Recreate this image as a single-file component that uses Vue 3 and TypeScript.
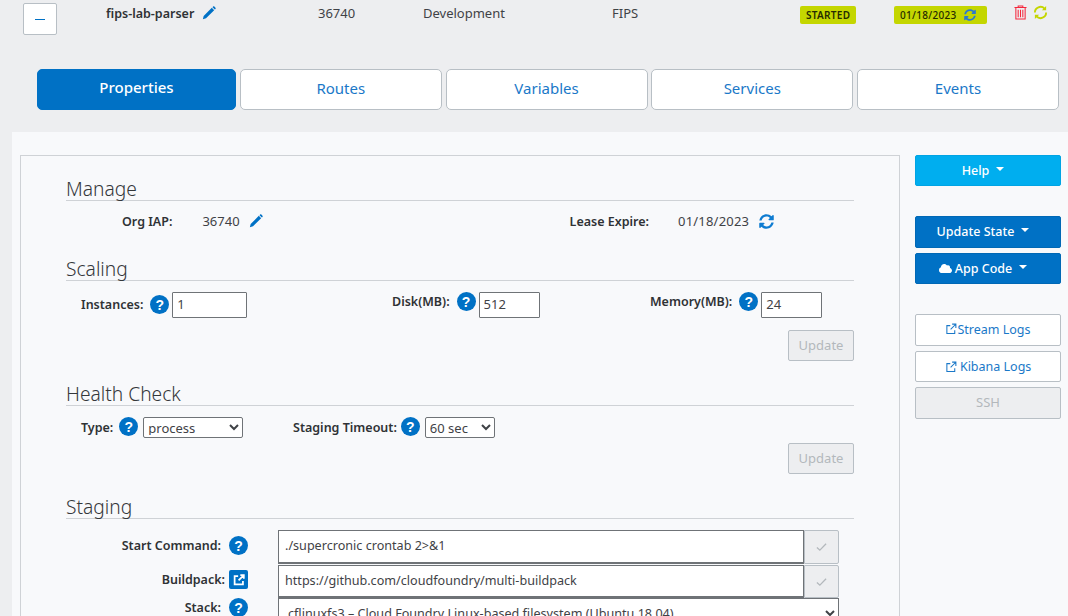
<script setup lang="ts">
const tabs = ['Properties', 'Routes', 'Variables', 'Services', 'Events']
const syncPath = 'M370.72 133.28C339.458 104.008 298.888 87.962 255.848 88c-77.458.068-144.328 53.178-162.791 126.85-1.344 5.363-6.122 9.15-11.651 9.15H24.103c-7.498 0-13.194-6.807-11.807-14.176C33.933 94.924 134.813 8 256 8c66.448 0 126.791 26.136 171.315 68.685L463.03 40.97C478.149 25.851 504 36.559 504 57.941V192c0 13.255-10.745 24-24 24H345.941c-21.382 0-32.09-25.851-16.971-40.971l41.75-41.749zM32 296h134.059c21.382 0 32.09 25.851 16.971 40.971l-41.75 41.75c31.262 29.273 71.835 45.319 114.876 45.28 77.418-.07 144.315-53.144 162.787-126.849 1.344-5.363 6.122-9.15 11.651-9.15h57.304c7.498 0 13.194 6.807 11.807 14.176C478.067 417.076 377.187 504 256 504c-66.448 0-126.791-26.136-171.315-68.685L48.97 471.03C33.851 486.149 8 475.441 8 454.059V320c0-13.255 10.745-24 24-24z'
const pencilPath = 'M1 15l.9-3.6L11.2 2.1l2.7 2.7-9.3 9.3zM12 1.3l.7-.7c.4-.4 1-.4 1.4 0l1.3 1.3c.4.4.4 1 0 1.4l-.7.7z'
</script>

<template>
  <div class="page">
    <div class="app-row">
      <button class="toggle" aria-label="Collapse"></button>
      <div class="app-name">
        fips-lab-parser
        <svg class="pencil" viewBox="0 0 16 16"><path :d="pencilPath" /></svg>
      </div>
      <div>36740</div>
      <div>Development</div>
      <div>FIPS</div>
      <div><span class="badge">STARTED</span></div>
      <div>
        <span class="badge badge-date">
          01/18/2023
          <svg class="sync-sm" viewBox="0 0 512 512"><path :d="syncPath" /></svg>
        </span>
      </div>
      <div class="row-actions">
        <svg class="trash" viewBox="0 0 14 16">
          <path d="M.5 2.500h13M4.500 2.500V1h5v1.500M2 2.500V15h10V2.500M4.500 5v8M7 5v8M9.500 5v8" />
        </svg>
        <svg class="sync-green" viewBox="0 0 16 16">
          <path d="M2 8a6 6 0 0 1 10.300-4.200M14 8a6 6 0 0 1-10.300 4.200" />
          <path class="arrow" d="M14 1v4.500H9.500zM2 15v-4.500h4.500z" />
        </svg>
      </div>
    </div>

    <div class="tabs">
      <button v-for="(tab, i) in tabs" :key="tab" class="tab" :class="{ active: i === 0 }">{{ tab }}</button>
    </div>

    <div class="panel">
      <div class="box">
        <h2>Manage</h2>
        <div class="manage-row">
          <b>Org IAP:</b>
          <span class="val-org">36740</span>
          <svg class="pencil" viewBox="0 0 16 16"><path :d="pencilPath" /></svg>
          <b class="lease">Lease Expire:</b>
          <span class="val-lease">01/18/2023</span>
          <svg class="sync" viewBox="0 0 512 512"><path :d="syncPath" /></svg>
        </div>

        <h2 class="next">Scaling</h2>
        <div class="scale-row">
          <div class="field low">
            <b>Instances:</b><i class="help">?</i>
            <input class="num num-wide" value="1" />
          </div>
          <div class="field">
            <b>Disk(MB):</b><i class="help">?</i>
            <input class="num" value="512" />
          </div>
          <div class="field">
            <b>Memory(MB):</b><i class="help">?</i>
            <input class="num" value="24" />
          </div>
        </div>
        <div class="update-line"><button class="update" disabled>Update</button></div>

        <h2 class="next-lg">Health Check</h2>
        <div class="health-row">
          <div class="field">
            <b>Type:</b><i class="help">?</i>
            <select class="sel sel-type"><option>process</option></select>
          </div>
          <div class="field timeout">
            <b>Staging Timeout:</b><i class="help">?</i>
            <select class="sel sel-time"><option>60 sec</option></select>
          </div>
        </div>
        <div class="update-line tight"><button class="update" disabled>Update</button></div>

        <h2 class="next-lg">Staging</h2>
        <div class="stage">
          <b class="stage-label">Start Command:</b>
          <i class="help">?</i>
          <div class="control">
            <input class="long" value="./supercronic crontab 2>&1" />
            <button class="check" disabled>
              <svg viewBox="0 0 12 10"><path d="M1 5.500l3.200 3L11 1.500" /></svg>
            </button>
          </div>
          <b class="stage-label push">Buildpack:</b>
          <span class="ext-btn">
            <svg viewBox="0 0 16 16"><path d="M7 3.500H3v9.500h9.500V9M9.500 2.500h4v4M13 3L7.500 8.500" /></svg>
          </span>
          <div class="control short">
            <input class="long" value="https://github.com/cloudfoundry/multi-buildpack" />
            <button class="check" disabled>
              <svg viewBox="0 0 12 10"><path d="M1 5.500l3.200 3L11 1.500" /></svg>
            </button>
          </div>
          <b class="stage-label stack-label">Stack:</b>
          <i class="help stack-help">?</i>
          <select class="stack">
            <option>cflinuxfs3 – Cloud Foundry Linux-based filesystem (Ubuntu 18.04)</option>
          </select>
        </div>
      </div>

      <aside class="side">
        <button class="act help-btn">Help<span class="caret"></span></button>
        <button class="act solid first">Update State<span class="caret"></span></button>
        <button class="act solid app-code">
          <svg class="cloud" viewBox="0 0 640 512"><path d="M537.6 226.6c4.100-10.700 6.400-22.400 6.400-34.600 0-53-43-96-96-96-19.700 0-38.100 6-53.300 16.200C367 64.200 315.300 32 256 32c-88.400 0-160 71.600-160 160 0 2.700.1 5.400.2 8.100C40.200 219.800 0 273.200 0 336c0 79.500 64.500 144 144 144h368c70.700 0 128-57.300 128-128 0-61.900-44-113.600-102.400-125.400z" /></svg>
          App Code<span class="caret"></span>
        </button>
        <button class="act outline logs">
          <svg class="ext" viewBox="0 0 16 16"><path d="M7 3.500H2.500V14H13V9.500M9.500 1.500h5v5M14 2L7.500 8.500" /></svg>Stream Logs
        </button>
        <button class="act outline kibana">
          <svg class="ext" viewBox="0 0 16 16"><path d="M7 3.500H2.500V14H13V9.500M9.500 1.500h5v5M14 2L7.500 8.500" /></svg>&nbsp;Kibana Logs
        </button>
        <button class="act ssh" disabled>SSH</button>
      </aside>
    </div>
  </div>
</template>

<style scoped>
.page {
  width: 1068px;
  height: 616px;
  overflow: hidden;
  background: #edeef0;
  color: #3f4246;
  font-family: "Noto Sans", "Open Sans", sans-serif;
  font-size: 13px;
}

b {
  color: #2f3235;
  font-weight: 600;
  font-size: 12.5px;
}

button {
  font-family: inherit;
}

svg {
  display: block;
  flex: none;
}

.app-row {
  display: grid;
  grid-template-columns: 83px 212px 105px 189px 188px 94px 119px 1fr;
  height: 69px;
  padding: 3px 0 0 23px;
  box-sizing: border-box;
  line-height: 21px;
}

.toggle {
  display: flex;
  align-items: center;
  justify-content: center;
  width: 34px;
  height: 32px;
  padding: 0;
  background: #fff;
  border: 1px solid #b8bfc5;
  border-radius: 2px;
}

.toggle::before {
  content: "";
  width: 10px;
  height: 1px;
  background: #0071c5;
}

.app-name {
  display: flex;
  align-items: flex-start;
  gap: 8px;
  font-weight: 600;
  font-size: 12.5px;
  color: #2f3235;
}

.pencil {
  width: 14px;
  height: 14px;
  fill: #0071c5;
}

.app-name .pencil {
  margin-top: 3px;
}

.badge {
  display: inline-flex;
  align-items: center;
  height: 18px;
  margin-top: 3px;
  padding: 0 6px;
  background: #c4d600;
  border-radius: 2px;
  color: #262b00;
  font-size: 10px;
  font-weight: 600;
  letter-spacing: 0.3px;
  line-height: 18px;
}

.badge-date {
  width: 93px;
  box-sizing: border-box;
  font-weight: 500;
  gap: 8px;
}

.sync-sm {
  width: 12px;
  height: 12px;
  fill: #2b78d0;
}

.row-actions {
  display: flex;
  gap: 6px;
  padding: 2px 0 0 1px;
}

.trash {
  width: 13px;
  height: 15px;
  fill: none;
  stroke: #f5263c;
  stroke-width: 1.1;
}

.sync-green {
  width: 15px;
  height: 15px;
  fill: none;
  stroke: #c4d600;
  stroke-width: 2;
}

.sync-green .arrow {
  fill: #c4d600;
  stroke: none;
}

.tabs {
  display: flex;
  gap: 3.75px;
  width: 1022px;
  height: 41px;
  margin-left: 37px;
}

.tab {
  flex: 1;
  padding: 0 0 3px;
  background: #fff;
  border: 1px solid #b8bfc5;
  border-radius: 5px;
  color: #1a78c8;
  font-size: 15px;
}

.tab.active {
  flex: 0 0 199px;
  padding-bottom: 5px;
  background: #0071c5;
  border-color: #0071c5;
  color: #fff;
  font-weight: 500;
}

.panel {
  display: flex;
  gap: 15px;
  height: 484px;
  margin: 22px 0 0 12px;
  padding: 23px 0 0 8px;
  box-sizing: border-box;
  background: #f8f9fb;
}

.box {
  width: 880px;
  height: 500px;
  flex: none;
  padding: 20px 45px 0;
  box-sizing: border-box;
  border: 1px solid #cfd2d6;
}

h2 {
  height: 25px;
  margin: 0;
  border-bottom: 1px solid #cfd2d6;
  box-sizing: border-box;
  color: #34373a;
  font-size: 19.2px;
  font-weight: 300;
  line-height: 26px;
}

h2.next {
  margin-top: 25px;
}

h2.next-lg {
  margin-top: 20px;
}

.manage-row {
  display: flex;
  align-items: center;
  height: 20px;
  margin-top: 10px;
  padding-left: 56px;
}

.val-org {
  margin-left: 30px;
  margin-right: 9px;
}

.lease {
  margin-left: 307px;
}

.val-lease {
  margin-left: 29px;
  margin-right: 10px;
  letter-spacing: 0.2px;
}

.sync {
  width: 15px;
  height: 15px;
  fill: #0f7cd1;
}

.field {
  display: flex;
  align-items: flex-start;
}

.field b {
  line-height: 19px;
}

.field.low b {
  line-height: 26px;
}

.help {
  display: flex;
  flex: none;
  align-items: center;
  justify-content: center;
  width: 19px;
  height: 19px;
  border-radius: 50%;
  background: #0071c5;
  color: #fff;
  font-family: "Liberation Sans", sans-serif;
  font-size: 14px;
  font-style: normal;
  font-weight: 700;
}

.field .help {
  margin-left: 7px;
  margin-right: 3px;
}

.field.low .help {
  margin-top: 3px;
}

.scale-row {
  display: grid;
  grid-template-columns: 311px 258px auto;
  margin-top: 11px;
  padding-left: 15px;
}

.num {
  width: 61px;
  height: 26px;
  padding: 0 4px 2px;
  box-sizing: border-box;
  background: #fff;
  border: 1px solid #6f7377;
  border-radius: 1px;
  color: #3f4246;
  font-family: inherit;
  font-size: 13px;
}

.num-wide {
  width: 75px;
}

.update-line {
  display: flex;
  justify-content: flex-end;
  margin-top: 12px;
}

.update-line.tight {
  margin-top: 5px;
}

.update {
  width: 66px;
  height: 31px;
  padding: 0 0 2px;
  background: #edeef0;
  border: 1px solid #b8bfc5;
  border-radius: 2px;
  color: #b3b8bc;
  font-size: 13px;
}

.health-row {
  display: grid;
  grid-template-columns: 212px auto;
  height: 21px;
  margin-top: 11px;
  padding-left: 15px;
}

.health-row b {
  line-height: 21px;
}

.health-row .help {
  margin-left: 6px;
  margin-right: 5px;
}

.health-row .timeout .help {
  margin-left: 4px;
}

.sel {
  height: 21px;
  padding: 0 0 2px;
  box-sizing: border-box;
  background: #fff;
  border: 1px solid #6f7377;
  border-radius: 2px;
  color: #3f4246;
  font-family: inherit;
  font-size: 13px;
}

.sel-type {
  width: 100px;
}

.sel-time {
  width: 70px;
}

.stage {
  display: grid;
  grid-template-columns: 155px 19px 583px;
  column-gap: 8px;
  margin-top: 11px;
}

.stage-label {
  padding-top: 6px;
  text-align: right;
  line-height: 19px;
}

.stage-label.push {
  margin-right: -4px;
  padding-top: 5px;
}

.stage-label.stack-label {
  padding-top: 0;
}

.stage .help {
  margin-top: 6px;
}

.stage .help.stack-help {
  margin-top: 0;
}

.ext-btn {
  display: flex;
  align-items: center;
  justify-content: center;
  width: 19px;
  height: 19px;
  margin-top: 5px;
  border-radius: 2px;
  background: #0071c5;
}

.ext-btn svg {
  width: 14px;
  height: 14px;
  fill: none;
  stroke: #fff;
  stroke-width: 2;
}

.control {
  display: flex;
  height: 34px;
  margin-left: 22px;
  margin-bottom: 1px;
}

.control.short {
  height: 33px;
  margin-bottom: 0;
}

.long {
  width: 526px;
  height: 100%;
  flex: none;
  padding: 0 6px 2px;
  box-sizing: border-box;
  background: #fff;
  border: 1px solid #6f7377;
  border-width: 1px 1px 2px 1px;
  color: #3f4246;
  font-family: inherit;
  font-size: 12.6px;
}

.check {
  display: flex;
  flex: none;
  align-items: center;
  justify-content: center;
  width: 35px;
  height: 100%;
  padding: 0;
  background: #edeef0;
  border: 1px solid #b8bfc5;
  border-radius: 0 2px 2px 0;
}

.check svg {
  width: 11px;
  height: 10px;
  fill: none;
  stroke: #b3b8bc;
  stroke-width: 1.4;
}

.stack {
  width: 561px;
  height: 31px;
  margin-left: 22px;
  padding: 0 0 0 5px;
  box-sizing: border-box;
  background: #fff;
  border: 1px solid #6f7377;
  border-radius: 0;
  color: #3f4246;
  font-family: inherit;
  font-size: 12.6px;
}

.side {
  display: flex;
  flex-direction: column;
  width: 146px;
}

.act {
  display: flex;
  align-items: center;
  justify-content: center;
  width: 146px;
  padding: 0;
  border-radius: 2px;
  font-size: 12.5px;
}

.help-btn {
  height: 31px;
  padding-right: 10px;
  background: #00aeef;
  border: 1px solid #00a4e4;
  color: #fff;
  font-weight: 500;
}

.solid {
  height: 32px;
  padding: 0 10px 2px 0;
  background: #0071c5;
  border: 1px solid #0068b5;
  color: #fff;
  font-weight: 500;
}

.first {
  margin-top: 30px;
}

.app-code {
  height: 31px;
  margin-top: 5px;
  padding-bottom: 0;
}

.caret {
  width: 0;
  height: 0;
  margin: 0 0 3px 7px;
  border-left: 4px solid transparent;
  border-right: 4px solid transparent;
  border-top: 4px solid #fff;
}

.cloud {
  width: 13px;
  height: 11px;
  margin-right: 3px;
  fill: #fff;
}

.outline {
  background: #fff;
  border: 1px solid #b8bfc5;
  color: #1a78c8;
}

.logs {
  height: 32px;
  margin-top: 30px;
  padding-bottom: 2px;
}

.kibana {
  height: 31px;
  margin-top: 5px;
}

.ext {
  width: 12px;
  height: 12px;
  fill: none;
  stroke: #1a78c8;
  stroke-width: 1.4;
}

.ssh {
  height: 32px;
  margin-top: 5px;
  padding-bottom: 2px;
  background: #edeef0;
  border: 1px solid #b8bfc5;
  color: #b3b8bc;
  font-size: 13px;
}
</style>
